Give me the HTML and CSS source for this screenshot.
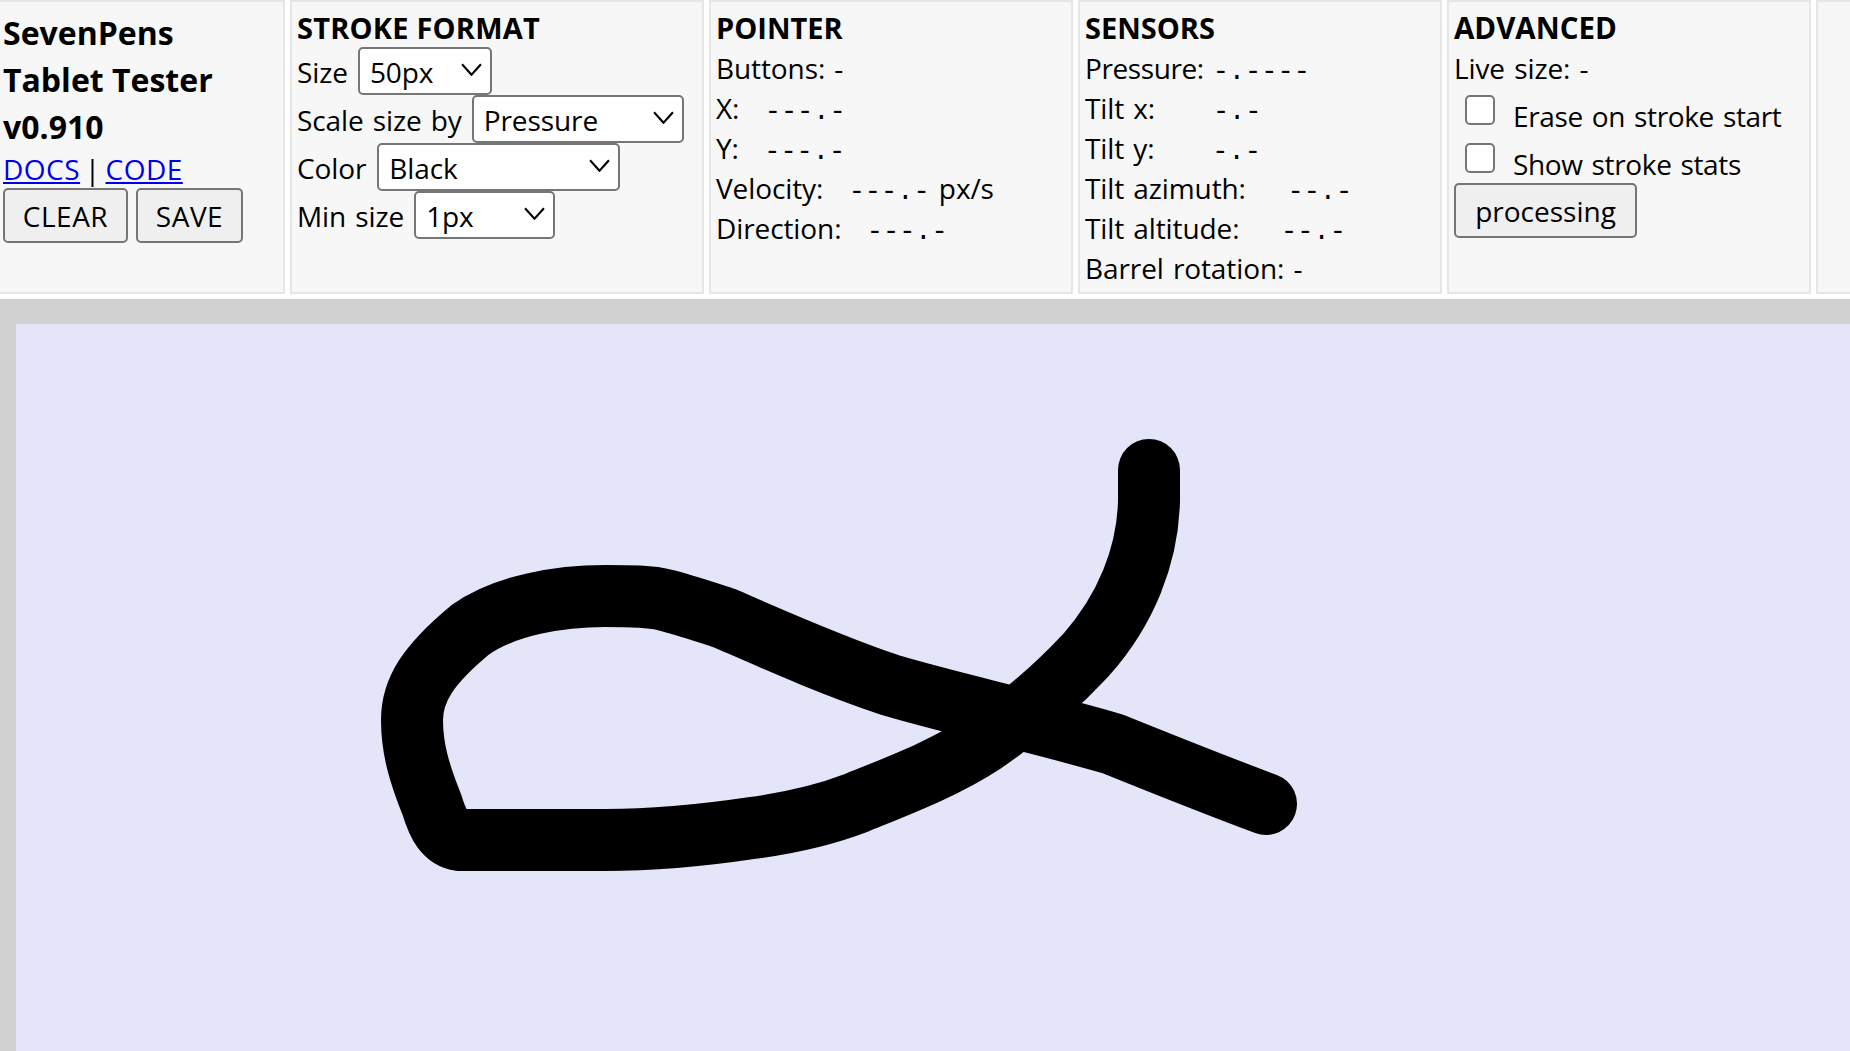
FILE: index.html
```html
<!DOCTYPE html>
<html lang="en">
<head>
<meta charset="utf-8">
<title>SevenPens Tablet Tester</title>
<link rel="stylesheet" href="styles.css">
</head>
<body>
<header class="toolbar">
  <section class="panel panel-brand">
    <h1 class="brand">SevenPens<br>Tablet Tester<br>v0.910</h1>
    <div class="links"><a href="#">DOCS</a> | <a href="#">CODE</a></div>
    <div class="actions">
      <button class="btn btn-clear">CLEAR</button>
      <button class="btn btn-save">SAVE</button>
    </div>
  </section>
  <section class="panel panel-wide">
    <h2 class="title title-stroke">STROKE FORMAT</h2>
    <div class="field"><label>Size</label><span class="select-wrap w-size"><select><option>50px</option></select><svg class="chev" viewBox="0 0 20 12"><path d="M1 1l9 10 9-10"/></svg></span></div>
    <div class="field"><label>Scale size by</label><span class="select-wrap w-scale"><select><option>Pressure</option></select><svg class="chev" viewBox="0 0 20 12"><path d="M1 1l9 10 9-10"/></svg></span></div>
    <div class="field field-color"><label>Color</label><span class="select-wrap w-color"><select><option>Black</option></select><svg class="chev" viewBox="0 0 20 12"><path d="M1 1l9 10 9-10"/></svg></span></div>
    <div class="field"><label>Min size</label><span class="select-wrap w-min"><select><option>1px</option></select><svg class="chev" viewBox="0 0 20 12"><path d="M1 1l9 10 9-10"/></svg></span></div>
  </section>
  <section class="panel">
    <h2 class="title">POINTER</h2>
    <div class="row">Buttons: -</div>
    <div class="row">X: <span class="mono"> ---.-</span></div>
    <div class="row">Y: <span class="mono"> ---.-</span></div>
    <div class="row">Velocity: <span class="mono"> ---.-</span> px/s</div>
    <div class="row">Direction: <span class="mono"> ---.-</span></div>
  </section>
  <section class="panel">
    <h2 class="title">SENSORS</h2>
    <div class="row row-tight">Pressure: <span class="mono">-.----</span></div>
    <div class="row">Tilt x: <span class="mono">   -.-</span></div>
    <div class="row">Tilt y: <span class="mono">   -.-</span></div>
    <div class="row">Tilt azimuth: <span class="mono">  --.-</span></div>
    <div class="row">Tilt altitude: <span class="mono">  --.-</span></div>
    <div class="row">Barrel rotation: -</div>
  </section>
  <section class="panel">
    <h2 class="title title-adv">ADVANCED</h2>
    <div class="row">Live size: -</div>
    <label class="check"><input type="checkbox"><span>Erase on stroke start</span></label>
    <label class="check"><input type="checkbox"><span>Show stroke stats</span></label>
    <button class="btn btn-processing">processing</button>
  </section>
  <section class="panel"></section>
</header>
<main class="stage">
  <div class="canvas">
    <svg class="drawing" viewBox="16 324 1834 727" aria-hidden="true">
      <path d="M1149 470 L1149 500 C1148 555 1126 610 1086 655 C1058 685 1020 718 983 743 C945 768 900 785 856 803 C822 816 790 823 752 828 C705 835 660 840 605 840 L460 840 C445 838 438 825 432 805 C420 775 412 750 412 720 C412 690 428 665 470 630 C505 605 560 596 605 596 C630 596 650 596 665 600 C685 605 705 612 724 618 C770 638 830 665 890 685 C950 703 1030 720 1113 744 C1165 765 1215 785 1266 804"/>
    </svg>
  </div>
</main>
</body>
</html>
```

FILE: styles.css
```css
* { box-sizing: border-box; }
html, body { margin: 0; height: 100%; }
body {
  width: 1850px;
  height: 1051px;
  overflow: hidden;
  background: #fff;
  color: #000;
  font-family: "Open Sans", "Noto Sans", sans-serif;
  font-size: 28px;
  letter-spacing: -0.1px;
  word-spacing: 2px;
  display: flex;
  flex-direction: column;
}
.toolbar {
  display: flex;
  gap: 5px;
  height: 299px;
  padding-bottom: 5px;
  overflow: hidden;
  flex: none;
}
.panel {
  flex: none;
  width: 364px;
  height: 294px;
  background: #f7f7f7;
  border: 2px solid #e6e6e6;
  padding: 6px 5px 0;
}
.panel-brand { width: 285px; border-left: 0; padding: 7px 0 0 3px; }
.panel-wide { width: 414px; }
.brand {
  margin: 0;
  font-size: 32px;
  line-height: 47px;
  font-weight: 700;
  letter-spacing: 0;
  word-spacing: 0;
}
.links { line-height: 38px; height: 38px; letter-spacing: 0.5px; word-spacing: -3px; }
.links a { color: #0000ee; }
.actions { display: flex; gap: 8px; }
.btn {
  font: inherit;
  letter-spacing: 0.5px;
  color: #000;
  background: #efefef;
  border: 2px solid #767676;
  border-radius: 5px;
  height: 55px;
  padding: 0;
}
.btn-clear { width: 125px; }
.btn-save { width: 107px; }
.btn-processing { width: 183px; margin-top: -1px; letter-spacing: 0; }
.title {
  margin: 0;
  font-size: 29px;
  line-height: 39px;
  font-weight: 700;
  letter-spacing: 0;
  word-spacing: 0;
}
.title-adv { font-size: 29.5px; }
.title-stroke { letter-spacing: 0.2px; }
.title + .row { margin-top: 1px; }
.field { display: flex; align-items: center; gap: 10px; height: 48px; }
.field-color { gap: 11px; }
.field label { padding-top: 2px; }
.select-wrap { position: relative; display: block; height: 48px; }
.select-wrap select {
  appearance: none;
  display: block;
  width: 100%;
  height: 100%;
  font: inherit;
  letter-spacing: inherit;
  color: #000;
  background: #fff;
  border: 2px solid #767676;
  border-radius: 5px;
  padding: 2px 0 0 10px;
}
.chev {
  position: absolute;
  right: 10px;
  top: 16px;
  width: 21px;
  height: 13px;
  fill: none;
  stroke: #000;
  stroke-width: 2;
  pointer-events: none;
}
.w-size { width: 134px; }
.w-scale { width: 212px; }
.w-color { width: 243px; }
.w-min { width: 141px; }
.row { line-height: 40px; height: 40px; white-space: pre; }
.row-tight { letter-spacing: -0.4px; }
.mono { font-family: "Liberation Mono", monospace; font-size: 27px; letter-spacing: 0; word-spacing: 0; }
.check { display: flex; align-items: flex-start; height: 48px; padding-left: 11px; }
.check input {
  appearance: none;
  width: 30px;
  height: 30px;
  margin: 7px 18px 0 0;
  background: #fff;
  border: 2px solid #767676;
  border-radius: 5px;
  flex: none;
}
.check span { line-height: 48px; padding-top: 4px; letter-spacing: -0.35px; }
.stage {
  flex: 1;
  background: #d1d1d1;
  padding: 25px 0 0 16px;
  overflow: hidden;
}
.canvas { width: 1834px; height: 727px; background: #e5e5fa; }
.drawing { display: block; width: 100%; height: 100%; }
.drawing path {
  fill: none;
  stroke: #000;
  stroke-width: 62;
  stroke-linecap: round;
  stroke-linejoin: round;
}
```
